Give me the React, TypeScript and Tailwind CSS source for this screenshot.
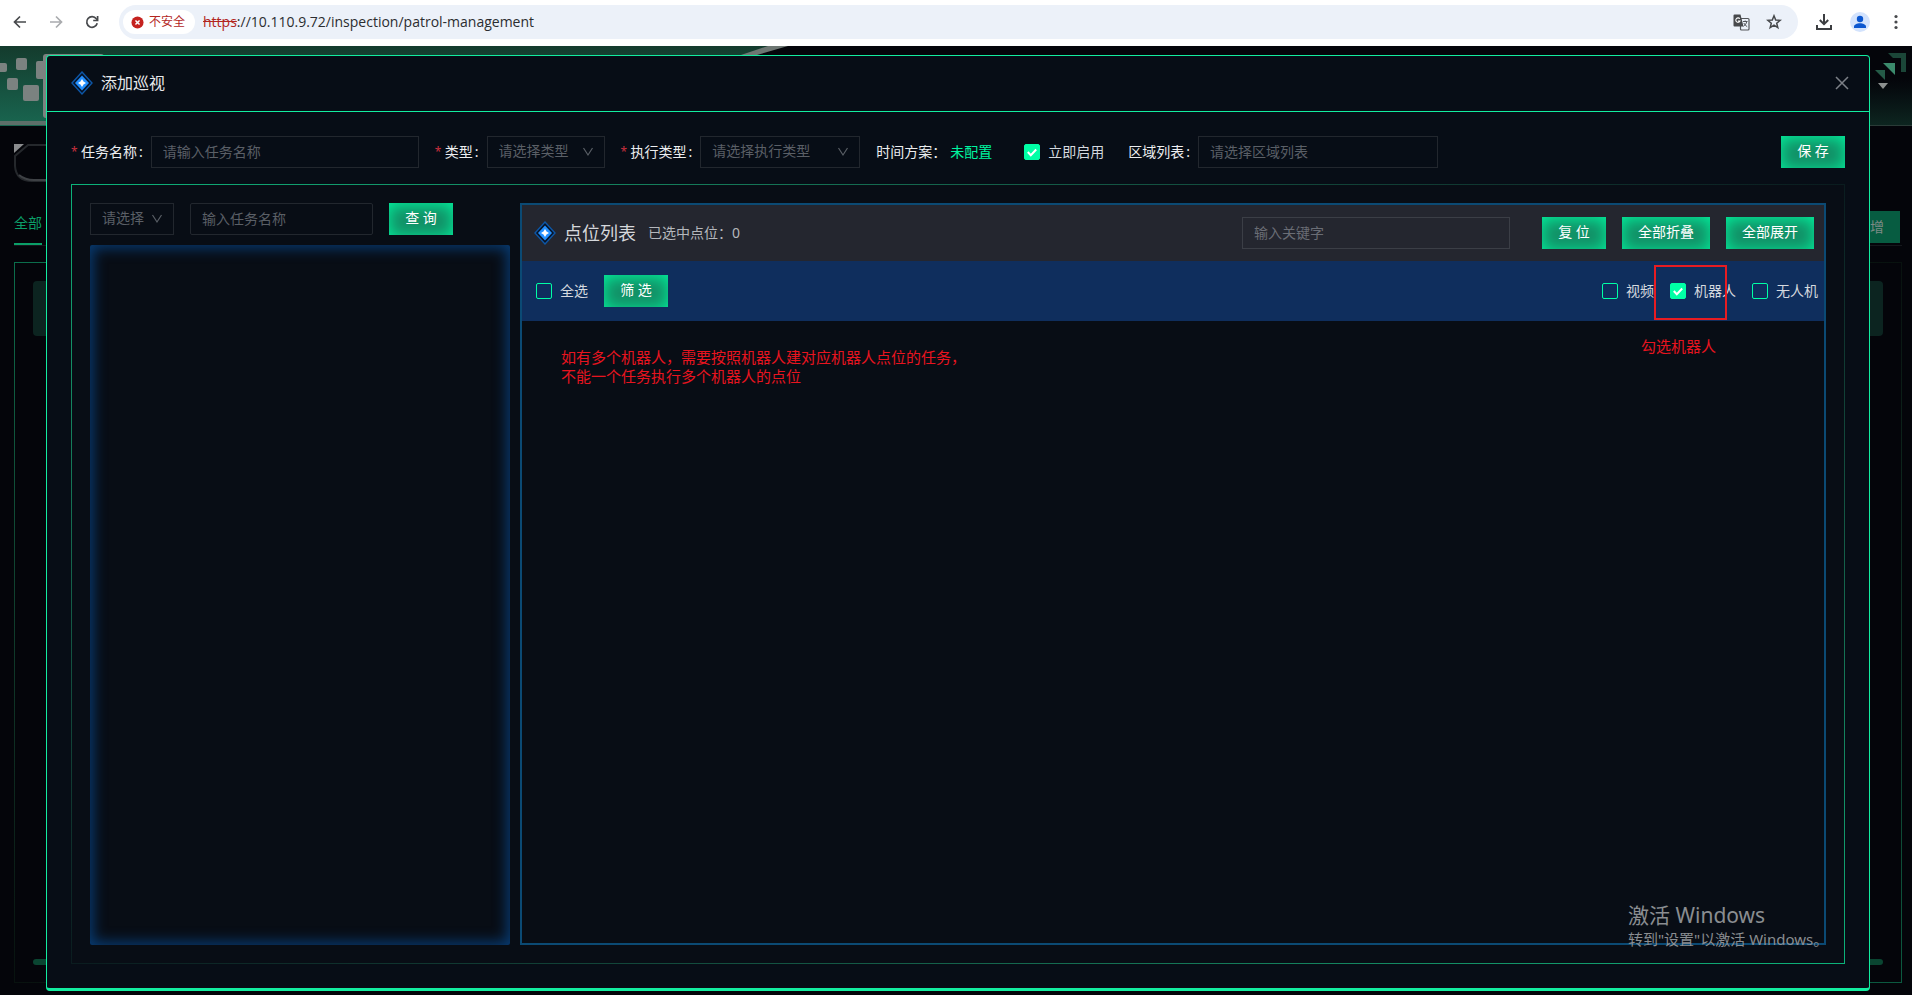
import { useState } from "react";
import type { ReactNode } from "react";
import { clsx } from "clsx";

const FONT = "font-['Noto_Sans','Noto_Sans_CJK_SC',sans-serif]";
const FIELD =
  "h-8 border border-[#22272e] bg-transparent px-[11px] pb-[2px] text-sm text-[#d0d3d6] outline-none placeholder:text-[#5a5f66]";

function DiamondIcon() {
  return (
    <svg className="h-6 w-[22px] shrink-0" viewBox="0 0 22 24" fill="none">
      <path d="M11 1 21 12 11 23 1 12Z" fill="#061327" stroke="#0d56a6" strokeWidth="1.4" />
      <path d="M11 4.500 18 12 11 19.500 4 12Z" fill="#2490ff" />
      <path d="M11 8 12.500 10.500 15 12 12.500 13.500 11 16 9.500 13.500 7 12 9.500 10.500Z" fill="#fff" />
    </svg>
  );
}

function BrowserBar() {
  return (
    <div className="flex h-[46px] shrink-0 items-center bg-white pb-[2px]">
      <div className="flex items-center gap-5 pl-3 text-[#47494c]">
        <button aria-label="后退">
          <svg className="h-4 w-4" viewBox="0 0 16 16" fill="none" stroke="currentColor" strokeWidth="1.7">
            <path d="M14 8H3M8 2.500 2.500 8 8 13.500" />
          </svg>
        </button>
        <button aria-label="前进" className="text-[#a9abae]">
          <svg className="h-4 w-4" viewBox="0 0 16 16" fill="none" stroke="currentColor" strokeWidth="1.7">
            <path d="M2 8h11M8 2.500 13.500 8 8 13.500" />
          </svg>
        </button>
        <button aria-label="刷新">
          <svg className="h-4 w-4" viewBox="0 0 16 16" fill="none" stroke="currentColor" strokeWidth="1.7">
            <path d="M13.200 9.300A5.300 5.300 0 1 1 12.300 4.800L13.500 6" />
            <path d="M13.600 2v4.500H9.200" />
          </svg>
        </button>
      </div>
      <div className="ml-[19px] flex h-[34px] flex-1 items-center rounded-full bg-[#ecf1f9] pl-1 pr-4">
        <div className="flex h-6 items-center gap-[5px] rounded-full bg-white pl-2 pr-[10px]">
          <svg className="h-[13px] w-[13px]" viewBox="0 0 14 14">
            <circle cx="7" cy="7" r="6.500" fill="#c5221f" />
            <path d="m4.800 4.800 4.400 4.400M9.200 4.800 4.800 9.200" stroke="#fff" strokeWidth="1.6" />
          </svg>
          <span className="text-xs text-[#b3261e]">不安全</span>
        </div>
        <div className="ml-2 flex-1 font-['Open_Sans',sans-serif] text-sm text-[#2b2d30]">
          <span className="text-[#b3261e] line-through">https</span>
          ://10.110.9.72/inspection/patrol-management
        </div>
        <button aria-label="翻译">
          <svg className="h-[17px] w-[17px]" viewBox="0 0 17 17" fill="none">
            <rect x="7.500" y="4.500" width="8.500" height="11.500" rx="1" stroke="#54565a" strokeWidth="1.200" />
            <path d="M1.500.500h6L10.500 12.500H1.500a1 1 0 0 1-1-1v-10a1 1 0 0 1 1-1Z" fill="#47494c" />
            <path d="M6.800 4.800A2.200 2.200 0 1 0 7 7H5" stroke="#fff" strokeWidth="1.100" />
            <path d="M10 7.500h4.500M12.200 6.500v1M13.800 7.500c-.4 2-1.700 3.800-3.300 4.800M10.800 9c.7 1.500 1.800 2.700 3.400 3.700" stroke="#54565a" />
          </svg>
        </button>
        <button aria-label="收藏" className="ml-4">
          <svg className="h-4 w-4" viewBox="0 0 16 16" fill="none" stroke="#47494c" strokeWidth="1.500">
            <path d="m8 1.800 1.700 4.200 4.500.300-3.500 2.900 1.100 4.400L8 11.200l-3.800 2.400 1.100-4.400L1.800 6.300l4.500-.300Z" />
          </svg>
        </button>
      </div>
      <div className="ml-[18px] flex items-center pr-2">
        <button aria-label="下载">
          <svg className="h-4 w-4" viewBox="0 0 16 16" fill="none" stroke="#3c3e41" strokeWidth="2">
            <path d="M8 0v10M3.800 6 8 10.200 12.200 6M1 11v4h14v-4" />
          </svg>
        </button>
        <button aria-label="用户" className="ml-[18px]">
          <svg className="h-5 w-5" viewBox="0 0 20 20">
            <circle cx="10" cy="10" r="10" fill="#d3e3fd" />
            <circle cx="10" cy="7" r="3.200" fill="#0b57d0" />
            <path d="M4 16v-1.500c0-2 3-3.300 6-3.300s6 1.300 6 3.300V16Z" fill="#0b57d0" />
          </svg>
        </button>
        <button aria-label="菜单" className="ml-[18px]">
          <svg className="h-4 w-4" viewBox="0 0 16 16" fill="#47494c">
            <circle cx="8" cy="2.500" r="1.600" />
            <circle cx="8" cy="8" r="1.600" />
            <circle cx="8" cy="13.500" r="1.600" />
          </svg>
        </button>
      </div>
    </div>
  );
}

// Dimmed page that shows around the edges of the dialog
function PageBehind() {
  return (
    <div className="flex flex-1 flex-col bg-[#04050a]">
      <div className="flex h-20 justify-between bg-linear-to-b from-[#04050a] from-40% to-[#0d2620]">
        <svg className="h-20 w-[800px]" viewBox="0 0 800 80">
          <defs>
            <linearGradient id="banner" x1="0" y1="0" x2="0" y2="1">
              <stop offset="0" stopColor="#143b2d" />
              <stop offset="1" stopColor="#196650" />
            </linearGradient>
          </defs>
          <path d="M0 0H770L700 26 600 80H0Z" fill="url(#banner)" />
          <path d="M768 0H788L740 14 690 80 H650L738 10Z" fill="#6d7672" />
          <path d="M0 75H650V79H0Z" fill="#5d6f69" />
          <g fill="#7b8280">
            <rect x="-2" y="17" width="9" height="9" rx="2" />
            <rect x="16" y="12" width="11" height="12" rx="2" />
            <rect x="36" y="15" width="12" height="18" rx="2" />
            <rect x="7" y="32" width="11" height="12" rx="2" />
            <rect x="23" y="39" width="16" height="16" rx="2" />
            <rect x="43" y="8" width="61" height="64" rx="3" />
          </g>
        </svg>
        <svg className="h-20 w-[42px]" viewBox="0 0 42 80">
          <path d="M18 7H36V26H31V12H23Z" fill="#1b4638" />
          <path d="M13 17H25V29Z" fill="#3b8a6c" />
          <path d="M5 24H15V34Z" fill="#245a47" />
          <path d="M8 37H18L13 43Z" fill="#8d9190" />
          <path d="M0 79.500H42" stroke="#2a3b37" />
        </svg>
      </div>
      <div className="flex flex-1 flex-col pb-3 pl-[14px] pr-[10px] pt-[18px]">
        <svg className="h-[38px] w-[60px]" viewBox="0 0 60 38" fill="none">
          <path d="M0 0H10L0 9Z" fill="#8a8c8e" />
          <path d="M60 1H14L1 12V22Q2 37 18 37H60" stroke="#25282c" strokeWidth="2" />
          <path d="M5 31Q11 36 20 36H60" stroke="#3e4145" strokeWidth="2" />
        </svg>
        <div className="mt-[26px] flex h-[38px] items-center justify-between border-b border-[#15181c]">
          <span className="flex h-full items-center border-b-2 border-[#0b9f68] pb-[6px] text-sm text-[#0b9f68]">
            全部
          </span>
          <button className="mr-[2px] h-8 w-16 bg-[#075c41] text-right text-sm text-[#7d8a85]">
            <span className="mr-4">新 增</span>
          </button>
        </div>
        <div className="mt-4 flex flex-1 bg-linear-to-br from-[#0b6e4c] via-[#08120f] to-[#0b5a40] p-px">
          <div className="flex flex-1 flex-col justify-between bg-[#04050a] px-[18px] pb-[17px] pt-[18px]">
            <div className="h-[55px] rounded-sm bg-[#0c2420]" />
            <div className="h-[6px] rounded-full bg-[#0a4531]" />
          </div>
        </div>
      </div>
    </div>
  );
}

function GlowButton({ children, wide }: { children: ReactNode; wide?: boolean }) {
  return (
    <button
      className={clsx(
        "h-8 shrink-0 whitespace-nowrap bg-[#128f66] pb-[2px] text-sm text-white shadow-[inset_0_2px_16px_#00f59f]",
        wide ? "w-[88px]" : "w-16"
      )}
    >
      {children}
    </button>
  );
}

function Checkbox({ label, checked = false }: { label: string; checked?: boolean }) {
  const [on, setOn] = useState(checked);

  return (
    <label className="flex shrink-0 items-center gap-2 text-sm text-[#d5d9df]">
      <span className="relative flex h-4 w-4">
        <input
          type="checkbox"
          checked={on}
          onChange={(e) => setOn(e.target.checked)}
          className="h-4 w-4 appearance-none rounded-[2px] border border-[#00ffa6] checked:bg-[#00ffa6]"
        />
        {on && (
          <svg className="pointer-events-none absolute inset-0 h-4 w-4" viewBox="0 0 16 16" fill="none">
            <path d="m3.800 8 3 3.200 5.400-5.700" stroke="#fff" strokeWidth="2" />
          </svg>
        )}
      </span>
      {label}
    </label>
  );
}

function SelectBox({ id, placeholder, className }: { id: string; placeholder: string; className: string }) {
  return (
    <span className={clsx("relative flex shrink-0", className)}>
      <select
        id={id}
        aria-label={placeholder}
        defaultValue=""
        className="h-8 w-full appearance-none border border-[#22272e] bg-transparent pb-[2px] pl-[11px] text-sm text-[#5a5f66] outline-none"
      >
        <option value="">{placeholder}</option>
      </select>
      <svg
        className="pointer-events-none absolute right-[11px] top-[11px] h-[10px] w-[12px]"
        viewBox="0 0 12 10"
        fill="none"
      >
        <path d="m1.500 1 4.500 7 4.500-7" stroke="#5a5f66" strokeWidth="1.200" />
      </svg>
    </span>
  );
}

function FormItem({
  id,
  label,
  required,
  children,
}: {
  id: string;
  label: string;
  required?: boolean;
  children: ReactNode;
}) {
  return (
    <div className="flex shrink-0 items-center">
      <label htmlFor={id} className="mr-2 flex items-center text-sm text-[#eceef0]">
        {required && <span className="mr-1 w-[6px] text-xs text-[#c9303e]">*</span>}
        {label}
        <span className="ml-[2px]">:</span>
      </label>
      {children}
    </div>
  );
}

function TaskForm() {
  return (
    <div className="flex items-center">
      <FormItem id="name" label="任务名称" required>
        <input id="name" placeholder="请输入任务名称" className={clsx(FIELD, "w-[268px]")} />
      </FormItem>
      <div className="ml-4">
        <FormItem id="type" label="类型" required>
          <SelectBox id="type" placeholder="请选择类型" className="w-[118px]" />
        </FormItem>
      </div>
      <div className="ml-4">
        <FormItem id="exec" label="执行类型" required>
          <SelectBox id="exec" placeholder="请选择执行类型" className="w-[160px]" />
        </FormItem>
      </div>
      <div className="ml-4 flex items-center text-sm text-[#eceef0]">
        时间方案：
        <a href="#plan" className="ml-1 text-[#00f5a0]">
          未配置
        </a>
      </div>
      <div className="ml-8">
        <Checkbox label="立即启用" checked />
      </div>
      <div className="ml-6">
        <FormItem id="area" label="区域列表">
          <input id="area" placeholder="请选择区域列表" className={clsx(FIELD, "w-60")} />
        </FormItem>
      </div>
      <div className="ml-auto">
        <GlowButton>保 存</GlowButton>
      </div>
    </div>
  );
}

function TaskTree() {
  return (
    <div className="flex w-[420px] shrink-0 flex-col">
      <div className="flex gap-4">
        <SelectBox id="kind" placeholder="请选择" className="w-[84px]" />
        <input
          aria-label="任务名称"
          placeholder="输入任务名称"
          className={clsx(FIELD, "w-[183px] rounded-[2px]")}
        />
        <GlowButton>查 询</GlowButton>
      </div>
      <div className="mt-[10px] flex-1 rounded-[2px] shadow-[inset_0_0_14px_3px_#083c74]" />
    </div>
  );
}

function PointList() {
  return (
    <div className="flex flex-1 flex-col border-2 border-[#0b4a74]">
      <div className="flex h-14 shrink-0 items-center bg-[#24262f] pl-3 pr-[10px]">
        <DiamondIcon />
        <h2 className="ml-2 text-lg text-[#d5d7db]">点位列表</h2>
        <span className="ml-3 text-sm text-[#b4b7bc]">已选中点位：0</span>
        <input
          aria-label="关键字"
          placeholder="输入关键字"
          className="ml-auto h-8 w-[268px] border border-[#3b3e46] bg-transparent px-[11px] pb-[2px] text-sm text-[#d0d3d6] outline-none placeholder:text-[#6a6d75]"
        />
        <div className="ml-8 flex gap-4">
          <GlowButton>复 位</GlowButton>
          <GlowButton wide>全部折叠</GlowButton>
          <GlowButton wide>全部展开</GlowButton>
        </div>
      </div>
      <div className="relative flex h-[60px] shrink-0 items-center justify-between bg-[#0f2e5d] pl-[14px] pr-[6px]">
        <div className="flex items-center gap-4">
          <Checkbox label="全选" />
          <GlowButton>筛 选</GlowButton>
        </div>
        <div className="flex gap-4">
          <Checkbox label="视频" />
          <Checkbox label="机器人" checked />
          <Checkbox label="无人机" />
        </div>
        <div className="pointer-events-none absolute right-[97px] top-1 h-[55px] w-[73px] border-2 border-[#e81c22]" />
      </div>
      <div className="flex flex-1 items-start justify-between pl-[39px] pr-[108px] text-[15px] leading-[19px] text-[#e8141f]">
        <p className="mt-[27px]">
          如有多个机器人，需要按照机器人建对应机器人点位的任务，
          <br />
          不能一个任务执行多个机器人的点位
        </p>
        <p className="mt-4">勾选机器人</p>
      </div>
    </div>
  );
}

export default function App() {
  return (
    <div className={clsx("relative flex min-h-screen flex-col overflow-hidden", FONT)}>
      <BrowserBar />
      <div className="relative flex flex-1 flex-col">
        <PageBehind />
        <div
          role="dialog"
          aria-labelledby="dialog-title"
          className="absolute bottom-1 left-[46px] right-[42px] top-[9px] flex flex-col rounded-sm border border-b-[3px] border-[#12eda0] bg-[#070d16]"
        >
          <div className="flex h-14 shrink-0 items-center border-b border-[#12eda0] pb-[2px] pl-6 pr-5">
            <DiamondIcon />
            <h1 id="dialog-title" className="ml-2 text-base text-[#e6e8ea]">
              添加巡视
            </h1>
            <button aria-label="关闭" className="ml-auto">
              <svg className="h-[14px] w-[14px]" viewBox="0 0 14 14" stroke="#7c8087" strokeWidth="1.500">
                <path d="m1 1 12 12M13 1 1 13" />
              </svg>
            </button>
          </div>
          <div className="flex flex-1 flex-col gap-4 p-6">
            <TaskForm />
            <div className="flex flex-1 bg-linear-to-br from-[#0bb37a] via-[#0a1c1f] to-[#0bb37a] p-px">
              <div className="flex flex-1 gap-[10px] bg-[#080d15] p-[18px]">
                <TaskTree />
                <PointList />
              </div>
            </div>
          </div>
        </div>
      </div>
      <div className="pointer-events-none absolute bottom-[46px] right-[84px] w-[200px] text-[#8a8d91]">
        <p className="text-[21px] leading-7">激活 Windows</p>
        <p className="whitespace-nowrap text-[15px] leading-5">转到"设置"以激活 Windows。</p>
      </div>
    </div>
  );
}
